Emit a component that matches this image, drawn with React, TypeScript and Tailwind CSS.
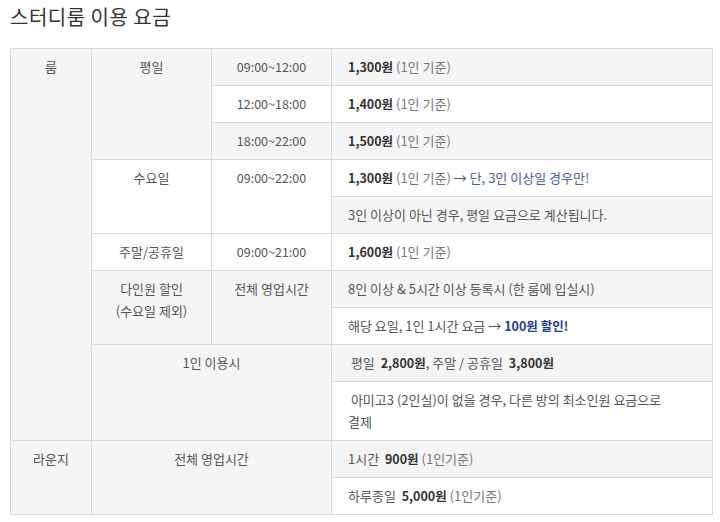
import React from 'react';

const font = { fontFamily: '"Noto Sans CJK KR", "Noto Sans", sans-serif' };

const cellBase = 'border border-[#d9d9d9] leading-[22px] py-[7px]';
const gray = 'bg-[#f5f5f5]';
const white = 'bg-white';
const headCell = `${cellBase} text-center align-top px-2`;
const timeCell = `${cellBase} text-center align-top px-2 text-[12.5px]`;
const infoCell = `${cellBase} text-left align-middle pl-[16px] pr-3`;

function Price({ value }: { value: string }) {
  return <b className="font-bold text-[#333] text-[12.5px]">{value}</b>;
}

function Note({ children }: { children: React.ReactNode }) {
  return <span className="text-[#777]">{children}</span>;
}

export default function App() {
  return (
    <div className="w-[720px] min-h-[522px] bg-white pt-[3px] pl-[10px] text-[#555]" style={font}>
      <h1 className="text-[20px] leading-[28px] font-normal text-[#333] tracking-[0.5px] mb-[17px]">
        스터디룸 이용 요금
      </h1>

      <table className="w-[702px] border-collapse table-fixed text-[13px]">
        <colgroup>
          <col className="w-[81px]" />
          <col className="w-[120px]" />
          <col className="w-[120px]" />
          <col className="w-[381px]" />
        </colgroup>
        <tbody>
          <tr className={gray}>
            <td rowSpan={10} className={headCell}>룸</td>
            <td rowSpan={3} className={headCell}>평일</td>
            <td className={timeCell}>09:00~12:00</td>
            <td className={infoCell}>
              <Price value="1,300원" /> <Note>(1인 기준)</Note>
            </td>
          </tr>
          <tr className={white}>
            <td className={timeCell}>12:00~18:00</td>
            <td className={infoCell}>
              <Price value="1,400원" /> <Note>(1인 기준)</Note>
            </td>
          </tr>
          <tr className={gray}>
            <td className={timeCell}>18:00~22:00</td>
            <td className={infoCell}>
              <Price value="1,500원" /> <Note>(1인 기준)</Note>
            </td>
          </tr>
          <tr className={white}>
            <td rowSpan={2} className={headCell}>수요일</td>
            <td rowSpan={2} className={timeCell}>09:00~22:00</td>
            <td className={infoCell}>
              <Price value="1,300원" /> <Note>(1인 기준)</Note> →{' '}
              <span className="text-[#4a5d9e]">단, 3인 이상일 경우만!</span>
            </td>
          </tr>
          <tr className={gray}>
            <td className={infoCell}>3인 이상이 아닌 경우, 평일 요금으로 계산됩니다.</td>
          </tr>
          <tr className={white}>
            <td className={headCell}>주말/공휴일</td>
            <td className={timeCell}>09:00~21:00</td>
            <td className={infoCell}>
              <Price value="1,600원" /> <Note>(1인 기준)</Note>
            </td>
          </tr>
          <tr className={gray}>
            <td rowSpan={2} className={headCell}>
              다인원 할인
              <br />
              (수요일 제외)
            </td>
            <td rowSpan={2} className={headCell}>전체 영업시간</td>
            <td className={infoCell}>8인 이상 &amp; 5시간 이상 등록시 (한 룸에 입실시)</td>
          </tr>
          <tr className={white}>
            <td className={infoCell}>
              해당 요일, 1인 1시간 요금 →{' '}
              <b className="font-bold text-[#1f3a93] text-[12.5px]">100원 할인!</b>
            </td>
          </tr>
          <tr className={gray}>
            <td rowSpan={2} colSpan={2} className={headCell}>1인 이용시</td>
            <td className={infoCell}>
              &nbsp;평일 &nbsp;<Price value="2,800원" />, 주말 / 공휴일 &nbsp;<Price value="3,800원" />
            </td>
          </tr>
          <tr className={white}>
            <td className={infoCell}>
              &nbsp;아미고3 (2인실)이 없을 경우, 다른 방의 최소인원 요금으로
              <br />
              결제
            </td>
          </tr>
          <tr className={gray}>
            <td rowSpan={2} className={headCell}>라운지</td>
            <td rowSpan={2} colSpan={2} className={headCell}>전체 영업시간</td>
            <td className={infoCell}>
              1시간 &nbsp;<Price value="900원" /> <Note>(1인기준)</Note>
            </td>
          </tr>
          <tr className={white}>
            <td className={infoCell}>
              하루종일 &nbsp;<Price value="5,000원" /> <Note>(1인기준)</Note>
            </td>
          </tr>
        </tbody>
      </table>
    </div>
  );
}
